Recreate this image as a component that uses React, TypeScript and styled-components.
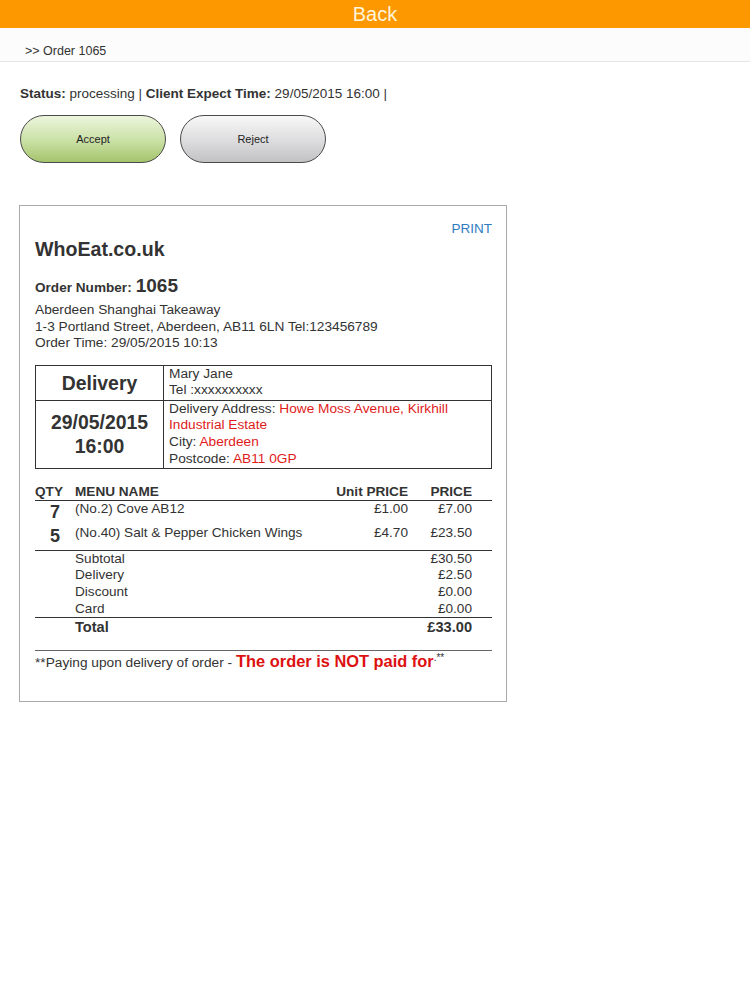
import React from "react";
import styled, { createGlobalStyle } from "styled-components";

const GlobalStyle = createGlobalStyle`
  html, body {
    margin: 0;
    padding: 0;
    background: #fff;
    font-family: "Liberation Sans", Arial, sans-serif;
    color: #333;
  }
`;

const TopBar = styled.div`
  height: 28px;
  background: #fd9800;
  color: #fff4dc;
  font-size: 20px;
  line-height: 28px;
  text-align: center;
`;

const Crumb = styled.div`
  height: 34px;
  box-sizing: border-box;
  padding: 15px 0 0 25px;
  font-size: 12.5px;
  line-height: 16px;
  background: #fcfcfc;
  border-bottom: 1px solid #e6e6e6;
`;

const Content = styled.div`
  padding: 24px 0 0 19px;
`;

const StatusLine = styled.div`
  padding-left: 1px;
  font-size: 13.5px;
  line-height: 16px;
  b {
    font-weight: bold;
  }
`;

const Buttons = styled.div`
  display: flex;
  gap: 14px;
  margin-top: 13px;
  padding-left: 1px;
`;

const Pill = styled.button<{ $tone: "green" | "grey" }>`
  width: 146px;
  height: 48px;
  border-radius: 24px;
  border: 1px solid #4a4a4a;
  font-family: "Liberation Sans", Arial, sans-serif;
  font-size: 11px;
  color: #222;
  background: ${(p) =>
    p.$tone === "green"
      ? "linear-gradient(#edf5dd, #c9e0a4 55%, #a4c46c)"
      : "linear-gradient(#f8f8f8, #dcdcde 55%, #c2c2c4)"};
`;

const Card = styled.div`
  width: 488px;
  box-sizing: border-box;
  margin-top: 42px;
  border: 1px solid #aaa;
  padding: 15px 14px 29px 15px;
`;

const PrintRow = styled.div`
  text-align: right;
  font-size: 13.5px;
  line-height: 16px;
  color: #2e7cbf;
`;

const Brand = styled.div`
  margin-top: 1px;
  font-size: 19.6px;
  line-height: 22px;
  font-weight: bold;
`;

const OrderNo = styled.div`
  margin-top: 16px;
  font-size: 13.6px;
  font-weight: bold;
  line-height: 20px;
  span {
    font-size: 19px;
    margin-left: 4px;
  }
`;

const Lines = styled.div`
  margin-top: 4px;
  font-size: 13.7px;
  line-height: 16.6px;
`;

const DeliveryTable = styled.table`
  width: 100%;
  margin-top: 13px;
  border-collapse: collapse;
  td {
    border: 1px solid #333;
    padding: 0 5px;
    font-size: 13.7px;
    line-height: 16.7px;
    vertical-align: top;
  }
`;

const NameRow = styled.tr`
  height: 35px;
`;

const BigCell = styled.td`
  && {
    width: 117px;
    text-align: center;
    vertical-align: middle;
    font-weight: bold;
    font-size: 19.4px;
    line-height: 24px;
  }
`;

const Red = styled.span`
  color: #e01b1b;
`;

const Items = styled.table`
  width: 100%;
  margin-top: 14px;
  border-collapse: collapse;
  font-size: 13.6px;
  th {
    font-weight: bold;
    line-height: 17px;
    padding: 0;
    text-align: left;
    border-bottom: 1px solid #333;
  }
  td {
    padding: 0;
    line-height: 16.7px;
    vertical-align: top;
  }
`;

const Right = styled.th`
  && {
    text-align: right;
  }
`;

const Num = styled.td<{ $bold?: boolean }>`
  && {
    text-align: right;
    font-weight: ${(p) => (p.$bold ? "bold" : "normal")};
  }
`;

const Qty = styled.td`
  && {
    font-size: 18px;
    font-weight: bold;
    line-height: 22px;
    text-align: center;
  }
`;

const ItemRow = styled.tr`
  height: 25px;
`;

const RuleRow = styled.tr`
  td {
    border-top: 1px solid #333;
  }
`;

const TotalRow = styled.tr`
  td {
    border-top: 1px solid #333;
    font-weight: bold;
    font-size: 14.6px;
    line-height: 19px;
  }
`;

const Footer = styled.div`
  margin-top: 13px;
  border-top: 1px solid #666;
  padding-top: 1px;
  font-size: 13.7px;
  line-height: 18px;
  b {
    color: #dd1111;
    font-size: 16.4px;
    margin-left: 4px;
  }
  small {
    font-size: 10px;
    vertical-align: top;
    line-height: 12px;
  }
`;

export default function App() {
  return (
    <>
      <GlobalStyle />
      <TopBar>Back</TopBar>
      <Crumb>&gt;&gt; Order 1065</Crumb>
      <Content>
        <StatusLine>
          <b>Status:</b> processing | <b>Client Expect Time:</b> 29/05/2015 16:00 |
        </StatusLine>
        <Buttons>
          <Pill $tone="green">Accept</Pill>
          <Pill $tone="grey">Reject</Pill>
        </Buttons>
        <Card>
          <PrintRow>PRINT</PrintRow>
          <Brand>WhoEat.co.uk</Brand>
          <OrderNo>
            Order Number:<span>1065</span>
          </OrderNo>
          <Lines>
            <div>Aberdeen Shanghai Takeaway</div>
            <div>1-3 Portland Street, Aberdeen, AB11 6LN Tel:123456789</div>
            <div>Order Time: 29/05/2015 10:13</div>
          </Lines>
          <DeliveryTable>
            <tbody>
              <NameRow>
                <BigCell>Delivery</BigCell>
                <td>
                  Mary Jane
                  <br />
                  Tel :xxxxxxxxxx
                </td>
              </NameRow>
              <tr>
                <BigCell>
                  29/05/2015
                  <br />
                  16:00
                </BigCell>
                <td>
                  Delivery Address: <Red>Howe Moss Avenue, Kirkhill</Red>
                  <br />
                  <Red>Industrial Estate</Red>
                  <br />
                  City: <Red>Aberdeen</Red>
                  <br />
                  Postcode: <Red>AB11 0GP</Red>
                </td>
              </tr>
            </tbody>
          </DeliveryTable>
          <Items>
            <colgroup>
              <col style={{ width: 40 }} />
              <col />
              <col style={{ width: 90 }} />
              <col style={{ width: 64 }} />
              <col style={{ width: 20 }} />
            </colgroup>
            <thead>
              <tr>
                <th>QTY</th>
                <th>MENU NAME</th>
                <Right>Unit PRICE</Right>
                <Right>PRICE</Right>
                <th></th>
              </tr>
            </thead>
            <tbody>
              <ItemRow>
                <Qty>7</Qty>
                <td>(No.2) Cove AB12</td>
                <Num>£1.00</Num>
                <Num>£7.00</Num>
                <td></td>
              </ItemRow>
              <ItemRow>
                <Qty>5</Qty>
                <td>(No.40) Salt &amp; Pepper Chicken Wings</td>
                <Num>£4.70</Num>
                <Num>£23.50</Num>
                <td></td>
              </ItemRow>
              <RuleRow>
                <td></td>
                <td>Subtotal</td>
                <td></td>
                <Num>£30.50</Num>
                <td></td>
              </RuleRow>
              <tr>
                <td></td>
                <td>Delivery</td>
                <td></td>
                <Num>£2.50</Num>
                <td></td>
              </tr>
              <tr>
                <td></td>
                <td>Discount</td>
                <td></td>
                <Num>£0.00</Num>
                <td></td>
              </tr>
              <tr>
                <td></td>
                <td>Card</td>
                <td></td>
                <Num>£0.00</Num>
                <td></td>
              </tr>
              <TotalRow>
                <td></td>
                <td>Total</td>
                <td></td>
                <Num $bold>£33.00</Num>
                <td></td>
              </TotalRow>
            </tbody>
          </Items>
          <Footer>
            **Paying upon delivery of order -<b>The order is NOT paid for</b>
            <small>.**</small>
          </Footer>
        </Card>
      </Content>
    </>
  );
}
